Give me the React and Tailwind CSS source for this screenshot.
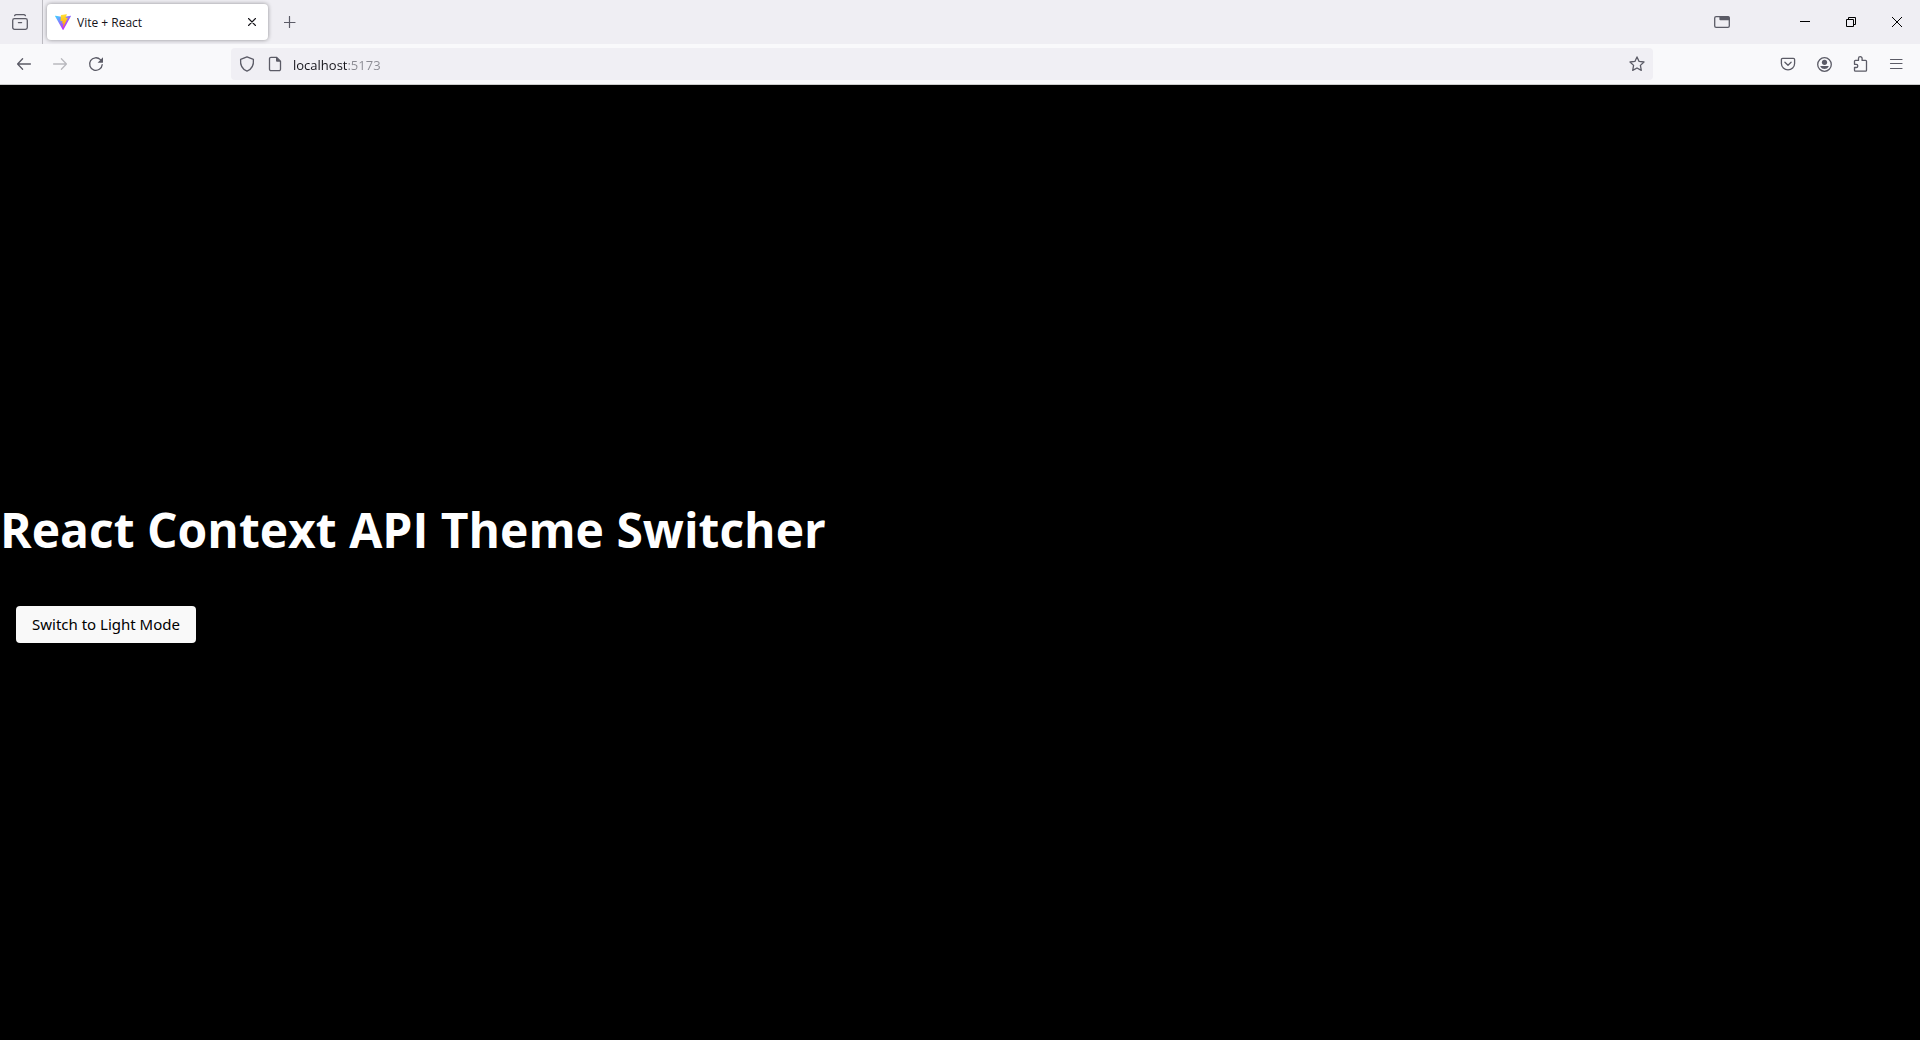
import { useState } from "react";

function Icon({ children, className = "size-4", viewBox = "0 0 16 16", strokeWidth = 1.3 }) {
  return (
    <svg
      className={`shrink-0 ${className}`}
      viewBox={viewBox}
      fill="none"
      stroke="currentColor"
      strokeWidth={strokeWidth}
      strokeLinecap="round"
      strokeLinejoin="round"
      aria-hidden="true"
    >
      {children}
    </svg>
  );
}

function ToolButton({ label, className = "text-[#5b5b66]", children, ...rest }) {
  return (
    <button
      type="button"
      aria-label={label}
      className={`flex h-8 w-9 shrink-0 items-center justify-center rounded ${className}`}
      {...rest}
    >
      {children}
    </button>
  );
}

function WindowButton({ label, children }) {
  return (
    <button type="button" aria-label={label} className="flex h-11 w-[46px] items-center justify-center text-black">
      <svg className="size-[10px]" viewBox="0 0 10 10" fill="none" stroke="currentColor" aria-hidden="true">
        {children}
      </svg>
    </button>
  );
}

function ViteLogo() {
  return (
    <svg className="size-4 shrink-0" viewBox="0 0 256 257" aria-hidden="true">
      <defs>
        <linearGradient id="viteBody" x1="-.828%" x2="57.636%" y1="7.652%" y2="78.411%">
          <stop offset="0%" stopColor="#41D1FF" />
          <stop offset="100%" stopColor="#BD34FE" />
        </linearGradient>
        <linearGradient id="viteBolt" x1="43.376%" x2="50.316%" y1="2.242%" y2="89.03%">
          <stop offset="0%" stopColor="#FFEA83" />
          <stop offset="8.333%" stopColor="#FFDD35" />
          <stop offset="100%" stopColor="#FFA800" />
        </linearGradient>
      </defs>
      <path
        fill="url(#viteBody)"
        d="M255.153 37.938L134.897 252.976c-2.483 4.44-8.862 4.466-11.382.048L.875 37.958c-2.746-4.814 1.371-10.646 6.827-9.67l120.385 21.517a6.537 6.537 0 0 0 2.322-.004l117.867-21.483c5.438-.991 9.574 4.796 6.877 9.62Z"
      />
      <path
        fill="url(#viteBolt)"
        d="M185.432.063L96.44 17.501a3.268 3.268 0 0 0-2.634 3.014l-5.474 92.456a3.268 3.268 0 0 0 3.997 3.378l24.777-5.718c2.318-.535 4.413 1.507 3.936 3.838l-7.361 36.047c-.495 2.426 1.782 4.5 4.151 3.78l15.304-4.649c2.372-.72 4.652 1.36 4.15 3.788l-11.698 56.621c-.732 3.542 3.979 5.473 5.943 2.437l1.313-2.028l72.516-144.72c1.215-2.423-.88-5.186-3.54-4.672l-25.505 4.922c-2.396.462-4.435-1.77-3.759-4.114l16.646-57.705c.677-2.35-1.37-4.583-3.769-4.113Z"
      />
    </svg>
  );
}

function TabStrip() {
  return (
    <div className="flex h-11 items-center bg-[#efeef3] text-[#5b5b66]">
      <ToolButton label="Recent browsing" className="ml-[2px] text-[#5b5b66]">
        <Icon>
          <path d="M2.6 1.6q.6-.9 1.6-.9h7.6q1 0 1.600.9" />
          <rect x="0.7" y="4.700" width="14.600" height="10.600" rx="1.800" />
          <path d="M6.400 8.600h3.200" />
        </Icon>
      </ToolButton>
      <div className="ml-1 w-px self-stretch bg-[#bcbbc1]" />
      <div className="ml-1 flex h-9 w-[221px] items-center rounded bg-white pl-2 pr-2 shadow-[0_0_4px_rgba(0,0,0,0.4)]">
        <ViteLogo />
        <span className="ml-[6px] flex-1 truncate pt-px text-[12px] leading-4 text-[#15141a]">Vite + React</span>
        <button type="button" aria-label="Close tab" className="flex size-4 items-center justify-center text-[#15141a]">
          <Icon className="size-2" viewBox="0 0 8 8" strokeWidth={1.1}>
            <path d="M0.500 0.500l7 7M7.500 0.500l-7 7" />
          </Icon>
        </button>
      </div>
      <ToolButton label="New tab" className="ml-1 text-[#5b5b66]">
        <Icon className="size-3" viewBox="0 0 12 12" strokeWidth={1.2}>
          <path d="M5.500 0.500v11M0 6.500h11" />
        </Icon>
      </ToolButton>
      <div className="ml-auto flex items-center">
        <ToolButton label="List all tabs" className="mr-[42px] text-[#5b5b66]">
          <Icon>
            <rect x="0.7" y="2.7" width="14.6" height="10.6" rx="1.4" />
            <path d="M5.4 2.2h8.6a1.6 1.6 0 0 1 1.6 1.6v2.4H6.4a1 1 0 0 1-1-1z" fill="currentColor" stroke="none" />
          </Icon>
        </ToolButton>
        <WindowButton label="Minimize">
          <path d="M0 4.5h10" />
        </WindowButton>
        <WindowButton label="Restore">
          <path d="M0.5 2.5h7v7h-7z" />
          <path d="M2.5 2.5v-2h7v7h-2" />
        </WindowButton>
        <WindowButton label="Close">
          <path d="M0 0l10 10M10 0L0 10" />
        </WindowButton>
      </div>
    </div>
  );
}

function NavBar() {
  return (
    <div className="flex h-[41px] items-center border-b border-[#cccccc] bg-[#f9f9fb] px-[6px] text-[#5b5b66]">
      <ToolButton label="Back">
        <Icon>
          <path d="M14.4 8H1.8M6.6 2.8L1.6 8l5 5.2" />
        </Icon>
      </ToolButton>
      <ToolButton label="Forward" className="text-[#b9b9be]" disabled>
        <Icon>
          <path d="M1.6 8h12.6M9.4 2.8l5 5.2-5 5.2" />
        </Icon>
      </ToolButton>
      <ToolButton label="Reload">
        <Icon>
          <path d="M14.2 8.6A6.3 6.3 0 1 1 12.4 3.6" />
          <path d="M15 1.2v5a.6.6 0 0 1-.6.6H9.6z" fill="currentColor" stroke="none" />
        </Icon>
      </ToolButton>
      <div className="mx-[117px] flex h-8 flex-1 items-center rounded bg-[#f0eff4] pl-2 pr-2">
        <Icon>
          <path d="M8 0.8l6.4 2.5c.5 5.6-1.3 9.9-6.4 11.9C2.9 13.2 1.1 8.9 1.6 3.3z" />
        </Icon>
        <Icon className="ml-3 size-4">
          <path d="M9.5 1.3H4a1.5 1.5 0 0 0-1.5 1.5v10.4A1.5 1.5 0 0 0 4 14.7h8a1.5 1.5 0 0 0 1.5-1.5V5.3z" />
          <path d="M9 1.2v3.6a1 1 0 0 0 1 1h3.8z" fill="currentColor" stroke="none" />
        </Icon>
        <input
          type="text"
          aria-label="Address"
          defaultValue="localhost:5173"
          spellCheck={false}
          className="ml-[10px] h-[22px] min-w-0 flex-1 bg-linear-to-r from-[#15141a] from-[54px] to-[#8a8a92] to-[54px] bg-clip-text pt-[2px] text-[13px] leading-5 text-transparent outline-none"
        />
        <button type="button" aria-label="Bookmark this page" className="flex size-4 items-center justify-center">
          <Icon>
            <path d="M8 0.9l2.1 4.5 4.9.6-3.6 3.4.9 5L8 12l-4.3 2.4.9-5L1 6l4.9-.6z" />
          </Icon>
        </button>
      </div>
      <ToolButton label="Save to Pocket">
        <Icon>
          <path d="M2.6 2.4h10.8a1.2 1.2 0 0 1 1.2 1.2V7.4a6.6 6.4 0 0 1-13.2 0V3.6a1.2 1.2 0 0 1 1.2-1.2z" />
          <path d="M4.9 6.3L8 9.2l3.1-2.9" />
        </Icon>
      </ToolButton>
      <ToolButton label="Account">
        <Icon>
          <circle cx="8.5" cy="8.5" r="6.8" />
          <circle cx="8.5" cy="6.3" r="2.6" fill="currentColor" stroke="none" />
          <path d="M4.9 10h7.200a.5.5 0 0 1 .5.7A4.800 4.600 0 0 1 8.500 13.100a4.800 4.600 0 0 1-4.100-2.400.5.5 0 0 1 .5-.7z" fill="currentColor" stroke="none" />
        </Icon>
      </ToolButton>
      <ToolButton label="Extensions">
        <Icon>
          <path d="M3.400 4.400h3.100V2.500a1.800 1.800 0 0 1 3.600 0v1.900h3.500a.9.9 0 0 1 .9.9v8.900a.9.9 0 0 1-.9.9H3.400a.9.9 0 0 1-.9-.9V11.500h1.700a1.600 1.600 0 0 0 0-3.200H2.500V5.300a.9.9 0 0 1 .9-.9z" />
        </Icon>
      </ToolButton>
      <ToolButton label="Menu">
        <Icon strokeWidth={1.2}>
          <path d="M2.500 3.500h11.500M2.500 7.500h11.500M2.500 12.500h11.500" />
        </Icon>
      </ToolButton>
    </div>
  );
}

export default function App() {
  const [dark, setDark] = useState(true);
  return (
    <div className="flex min-h-screen flex-col font-['Open_Sans','Noto_Sans',sans-serif]">
      <header>
        <TabStrip />
        <NavBar />
      </header>
      <main
        className={`flex flex-1 flex-col items-start justify-center ${dark ? "bg-black text-white" : "bg-white text-black"}`}
      >
        <h1 className="mt-9 mb-8 text-5xl leading-[56px] font-bold">React Context API Theme Switcher</h1>
        <button
          type="button"
          onClick={() => setDark(!dark)}
          className="m-4 rounded bg-[#f9f9f9] px-4 py-2 font-['Noto_Sans',sans-serif] text-[15px] leading-[21px] text-black"
        >
          {dark ? "Switch to Light Mode" : "Switch to Dark Mode"}
        </button>
      </main>
    </div>
  );
}
